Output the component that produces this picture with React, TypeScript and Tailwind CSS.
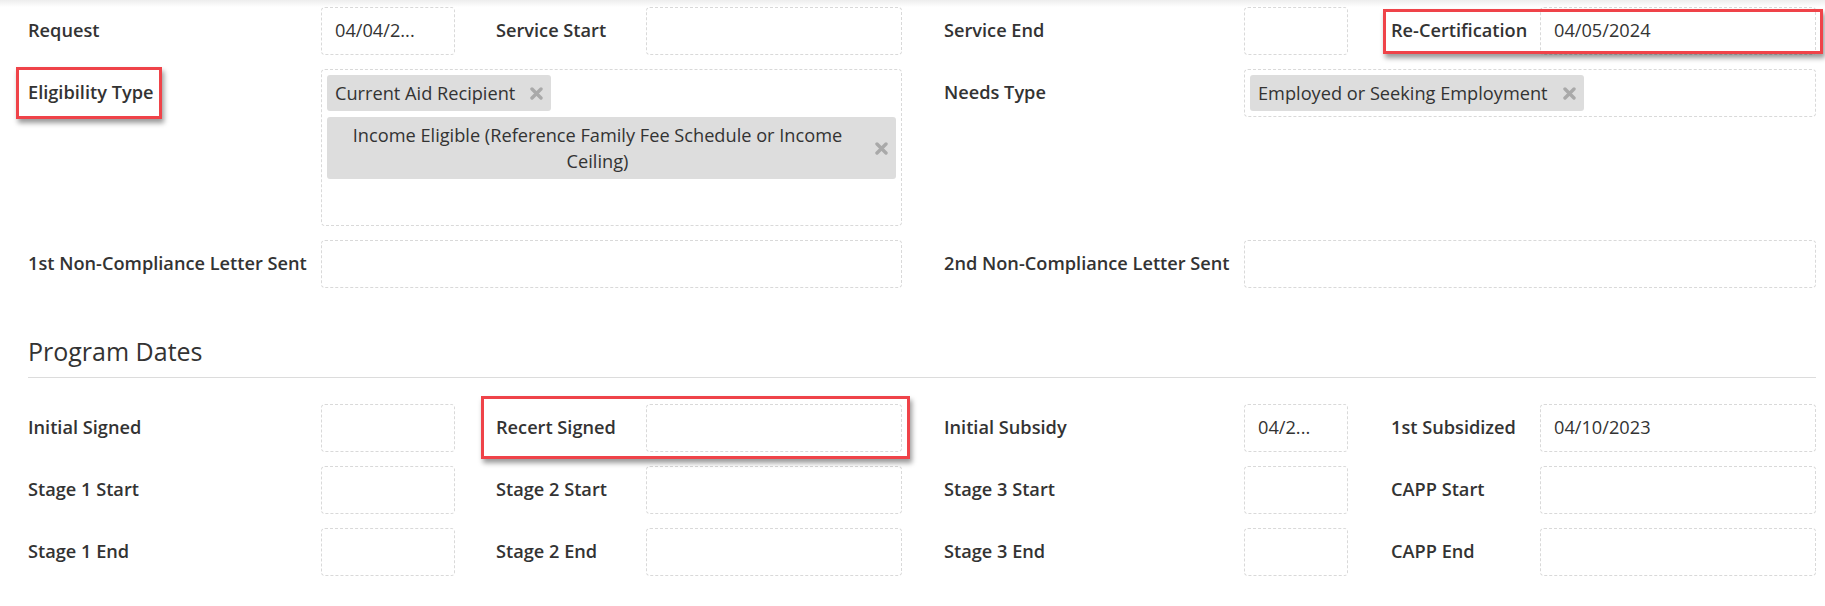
import React from 'react';

// Grey "x" used on the multiselect chips
const RemoveIcon: React.FC = () => (
  <svg width="13" height="13" viewBox="0 0 13 13" className="shrink-0">
    <path d="M2 2 L11 11 M11 2 L2 11" stroke="#a9a9a9" strokeWidth="3.4" strokeLinecap="round" />
  </svg>
);

const Label: React.FC<{ text: string; className?: string; children?: React.ReactNode }> = ({ text, className = '', children }) => (
  <div className={`relative h-[48px] flex items-center font-semibold shrink-0 whitespace-nowrap ${className}`}>
    {text}
    {children}
  </div>
);

const Box: React.FC<{ value?: string; className?: string }> = ({ value, className = '' }) => (
  <div className={`h-[48px] border border-dashed border-[#d9d9d9] rounded-[4px] px-[13px] flex items-center whitespace-nowrap overflow-hidden shrink-0 ${className}`}>
    {value}
  </div>
);

const Chip: React.FC<{ text: string; wide?: boolean }> = ({ text, wide }) => (
  <div className={`bg-[#dddddd] rounded-[3px] pl-[8px] pr-[8px] py-[5px] leading-[26px] flex items-center gap-[15px] ${wide ? 'w-full' : ''}`}>
    <span className={wide ? 'flex-1 text-center' : ''}>{text}</span>
    <RemoveIcon />
  </div>
);

// red annotation frame laid over the screenshot
const Mark: React.FC<{ className: string }> = ({ className }) => (
  <div className={`absolute border-[3px] border-[#ef4349] shadow-[2px_4px_5px_rgba(0,0,0,0.4)] pointer-events-none ${className}`} />
);

const App: React.FC = () => {
  return (
    <div className="w-[1825px] h-[606px] bg-white font-['Open_Sans',sans-serif] text-[18.2px] text-[#333] overflow-hidden">
      <div className="h-[7px] bg-linear-to-b from-[#ededed] to-white" />

      <div className="pl-[28px] w-[1816px]">
        <div className="flex flex-col gap-[14px]">
          {/* Request / Service Start | Service End / Re-Certification */}
          <div className="flex gap-[42px]">
            <div className="w-[874px] flex">
              <Label text="Request" className="w-[293px]" />
              <Box value="04/04/2..." className="w-[134px]" />
              <Label text="Service Start" className="w-[150px] ml-[41px]" />
              <Box className="flex-1" />
            </div>
            <div className="w-[872px] flex">
              <Label text="Service End" className="w-[300px]" />
              <Box className="w-[104px]" />
              <Label text="Re-Certification" className="w-[149px] ml-[43px]">
                <Mark className="left-[-8px] top-[2px] w-[440px] h-[45px]" />
              </Label>
              <Box value="04/05/2024" className="flex-1" />
            </div>
          </div>

          {/* Eligibility Type | Needs Type */}
          <div className="flex gap-[42px] items-start">
            <div className="w-[874px] flex items-start">
              <Label text="Eligibility Type" className="w-[293px]">
                <Mark className="left-[-12px] top-[-2px] w-[146px] h-[52px]" />
              </Label>
              <div className="flex-1 h-[157px] border border-dashed border-[#d9d9d9] rounded-[4px] p-[5px] flex flex-wrap content-start gap-[6px]">
                <Chip text="Current Aid Recipient" />
                <Chip text="Income Eligible (Reference Family Fee Schedule or Income Ceiling)" wide />
              </div>
            </div>
            <div className="w-[872px] flex items-start">
              <Label text="Needs Type" className="w-[300px]" />
              <div className="flex-1 h-[48px] border border-dashed border-[#d9d9d9] rounded-[4px] p-[5px] flex flex-wrap content-start gap-[6px]">
                <Chip text="Employed or Seeking Employment" />
              </div>
            </div>
          </div>

          {/* Non-compliance letters */}
          <div className="flex gap-[42px]">
            <div className="w-[874px] flex">
              <Label text="1st Non-Compliance Letter Sent" className="w-[293px]" />
              <Box className="flex-1" />
            </div>
            <div className="w-[872px] flex">
              <Label text="2nd Non-Compliance Letter Sent" className="w-[300px]" />
              <Box className="flex-1" />
            </div>
          </div>
        </div>

        <h3 className="mt-[49px] text-[25px] leading-[28px] font-normal text-[#333]">Program Dates</h3>
        <div className="mt-[12px] h-px bg-[#dcdcdc]" />

        <div className="mt-[26px] flex flex-col gap-[14px]">
          <div className="flex gap-[42px]">
            <div className="w-[874px] flex">
              <Label text="Initial Signed" className="w-[293px]" />
              <Box className="w-[134px]" />
              <Label text="Recert Signed" className="w-[150px] ml-[41px]">
                <Mark className="left-[-15px] top-[-8px] w-[429px] h-[63px]" />
              </Label>
              <Box className="flex-1" />
            </div>
            <div className="w-[872px] flex">
              <Label text="Initial Subsidy" className="w-[300px]" />
              <Box value="04/2..." className="w-[104px]" />
              <Label text="1st Subsidized" className="w-[149px] ml-[43px]" />
              <Box value="04/10/2023" className="flex-1" />
            </div>
          </div>

          <div className="flex gap-[42px]">
            <div className="w-[874px] flex">
              <Label text="Stage 1 Start" className="w-[293px]" />
              <Box className="w-[134px]" />
              <Label text="Stage 2 Start" className="w-[150px] ml-[41px]" />
              <Box className="flex-1" />
            </div>
            <div className="w-[872px] flex">
              <Label text="Stage 3 Start" className="w-[300px]" />
              <Box className="w-[104px]" />
              <Label text="CAPP Start" className="w-[149px] ml-[43px]" />
              <Box className="flex-1" />
            </div>
          </div>

          <div className="flex gap-[42px]">
            <div className="w-[874px] flex">
              <Label text="Stage 1 End" className="w-[293px]" />
              <Box className="w-[134px]" />
              <Label text="Stage 2 End" className="w-[150px] ml-[41px]" />
              <Box className="flex-1" />
            </div>
            <div className="w-[872px] flex">
              <Label text="Stage 3 End" className="w-[300px]" />
              <Box className="w-[104px]" />
              <Label text="CAPP End" className="w-[149px] ml-[43px]" />
              <Box className="flex-1" />
            </div>
          </div>
        </div>
      </div>
    </div>
  );
};

export default App;
